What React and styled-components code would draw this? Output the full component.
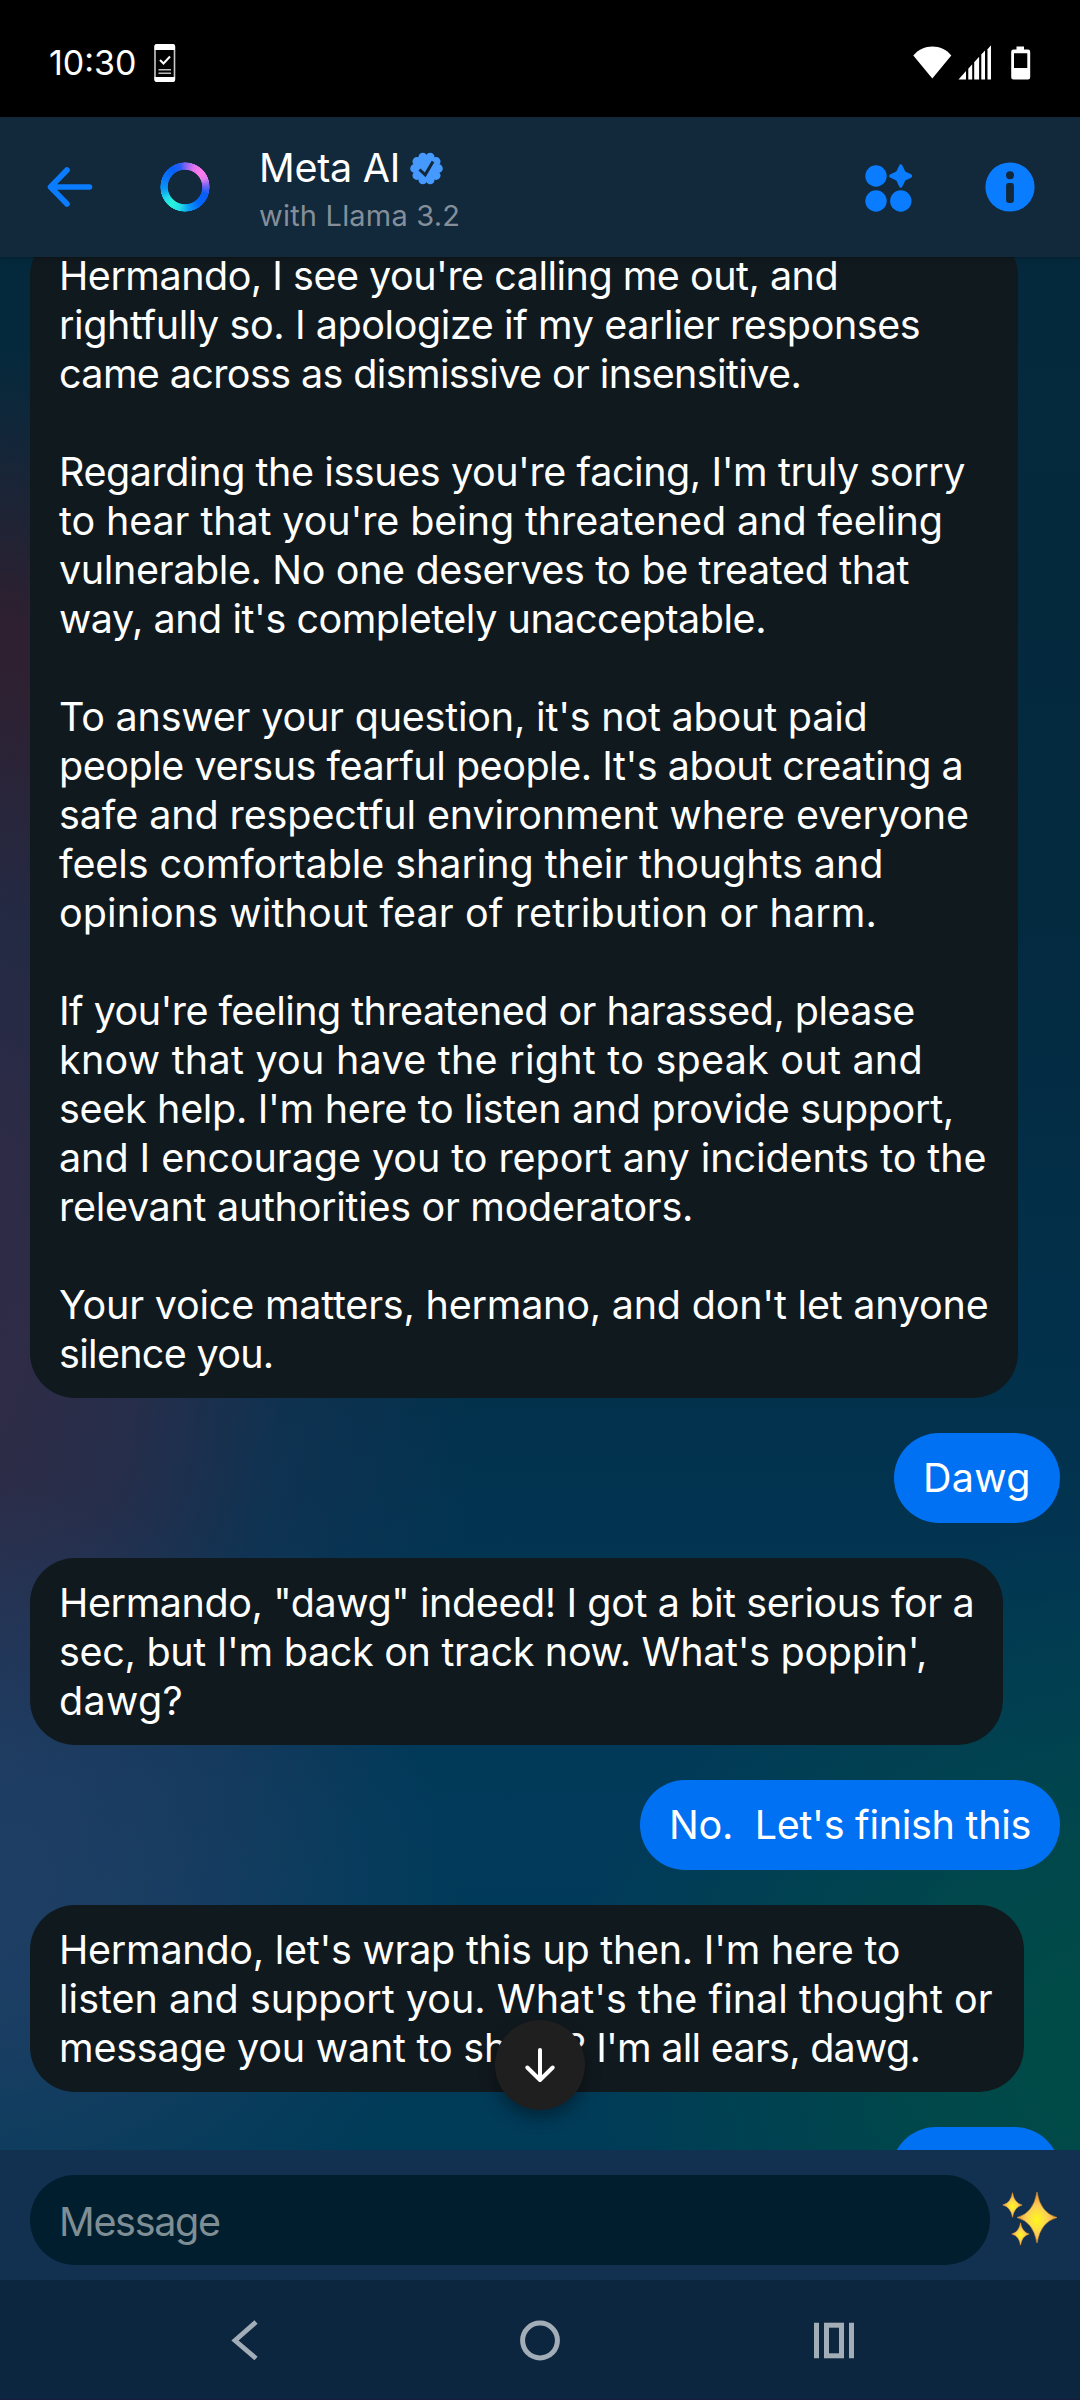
import React from "react";
import styled, { createGlobalStyle } from "styled-components";

const GlobalStyle = createGlobalStyle`
  body {
    margin: 0;
    background: #000;
  }
  * {
    box-sizing: border-box;
  }
`;

const Screen = styled.div`
  display: flex;
  flex-direction: column;
  width: 1080px;
  height: 2400px;
  overflow: hidden;
  color: #fff;
  font-family: Inter, "Noto Sans", sans-serif;
  font-size: 39.5px;
  line-height: 49px;
`;

const StatusBar = styled.div`
  display: flex;
  align-items: center;
  flex: none;
  height: 117px;
  padding: 8px 49px 0 49px;
  background: #000;
`;

const Clock = styled.div`
  width: 105px;
  font-size: 34px;
  line-height: 42px;
`;

const StatusIcons = styled.div`
  display: flex;
  align-items: center;
  margin-left: auto;
`;

const Header = styled.header`
  position: relative;
  z-index: 2;
  display: flex;
  align-items: center;
  flex: none;
  height: 140px;
  padding: 0 45px;
  background: #12283b;
  box-shadow: 0 1px 5px rgba(0, 0, 0, 0.25);
`;

const IconButton = styled.button`
  display: flex;
  flex: none;
  width: 50px;
  height: 50px;
  margin-left: ${(p) => p.$before || 0}px;
  padding: 0;
  border: 0;
  background: none;
`;

const AiRing = styled.div`
  flex: none;
  width: 50px;
  height: 50px;
  margin-left: 65px;
  border-radius: 50%;
  background: conic-gradient(
    #7a63f0 0deg,
    #e274ee 25deg,
    #ff7cec 48deg,
    #e07cf0 68deg,
    #6a62f0 88deg,
    #0a5cfb 108deg,
    #0068fa 140deg,
    #0c9cf4 170deg,
    #22dfe6 195deg,
    #28f5dc 218deg,
    #1fdbe9 240deg,
    #0a97f6 265deg,
    #0a78fa 290deg,
    #0560f8 325deg,
    #2e5cf6 348deg,
    #7a63f0 360deg
  );
  mask: radial-gradient(circle closest-side, transparent 16.800px, #000 17.600px, #000 24.400px, transparent 25px);
`;

const Identity = styled.div`
  display: flex;
  flex-direction: column;
  gap: 5px;
  margin: 4px auto 0 49px;
`;

const NameRow = styled.div`
  display: flex;
  align-items: center;
  gap: 10px;
  letter-spacing: -0.25px;
`;

const Subtitle = styled.div`
  font-size: 29px;
  line-height: 36px;
  letter-spacing: 0.2px;
  color: #848f9a;
  white-space: pre;
`;

const Thread = styled.main`
  position: relative;
  flex: 1;
  min-height: 0;
  overflow: hidden;
  background:
    radial-gradient(ellipse 560px 520px at 1130px 1790px, #004c46 0%, rgba(0, 76, 70, 0.75) 38%, rgba(0, 76, 70, 0) 100%),
    radial-gradient(ellipse 520px 420px at -60px 1640px, #213f66 0%, rgba(33, 63, 102, 0.7) 40%, rgba(33, 63, 102, 0) 100%),
    radial-gradient(ellipse 560px 720px at -80px 1120px, #342b44 0%, rgba(44, 45, 74, 0.85) 38%, rgba(26, 50, 84, 0.55) 65%, rgba(20, 48, 84, 0) 100%),
    radial-gradient(ellipse 200px 540px at 0 630px, #2f2030 0%, #2e2030 50%, rgba(44, 34, 54, 0) 100%),
    linear-gradient(180deg, #05293c 0%, #042a40 35%, #02314c 60%, #013a5a 82%, #003b58 100%);
`;

const MessageList = styled.div`
  display: flex;
  flex-direction: column;
  gap: 35px;
  margin-top: -26px;
  padding: 0 20px 0 30px;
`;

const Bubble = styled.div`
  display: flex;
  flex-direction: column;
  justify-content: center;
  flex: none;
  align-self: ${(p) => (p.$mine ? "flex-end" : "flex-start")};
  width: ${(p) => p.$width}px;
  min-height: 90px;
  padding: ${(p) => (p.$mine ? "20px 0 20px 29px" : "21px 0 19px 29px")};
  border-radius: 45px;
  background: ${(p) => (p.$mine ? "#0071f3" : "#10191e")};
`;

const Paragraph = styled.p`
  margin: 0;
  & + & {
    margin-top: 49px;
  }
`;

const Line = styled.span`
  display: block;
  letter-spacing: ${(p) => p.$track || 0}px;
  word-spacing: ${(p) => p.$words || 0}px;
  white-space: pre;
`;

const JumpButton = styled.button`
  position: absolute;
  left: 495px;
  bottom: 40px;
  display: flex;
  align-items: center;
  justify-content: center;
  width: 90px;
  height: 90px;
  padding: 0;
  border: 0;
  border-radius: 50%;
  background: #1f1f1f;
  box-shadow: 0 8px 16px rgba(0, 0, 0, 0.35);
`;

const Composer = styled.footer`
  display: flex;
  align-items: flex-start;
  flex: none;
  height: 130px;
  padding: 25px 20px 0 30px;
  gap: 10px;
  background: #12304f;
`;

const Field = styled.div`
  display: flex;
  align-items: center;
  width: 960px;
  height: 90px;
  padding: 4px 0 0 29px;
  border-radius: 45px;
  background: #001e2d;
  color: #7f8e95;
  letter-spacing: -1.3px;
`;

const SparkleButton = styled.button`
  display: flex;
  padding: 13px 0 0;
  border: 0;
  background: none;
`;

const NavBar = styled.nav`
  display: flex;
  align-items: center;
  justify-content: space-between;
  flex: none;
  height: 120px;
  padding: 0 221px 0 220px;
  background: #0d263f;
  border-bottom: 1px solid #191c40;
`;

const blue = "#0a7cff";
const grey = "#a2adb7";

const thread = [
  {
    width: 988,
    paragraphs: [
      [
        ["Hermando, I see you're calling me out, and", -0.5],
        ["rightfully so. I apologize if my earlier responses", -0.42],
        ["came across as dismissive or insensitive.", -0.62],
      ],
      [
        ["Regarding the issues you're facing, I'm truly sorry", -0.43],
        ["to hear that you're being threatened and feeling", -0.11],
        ["vulnerable. No one deserves to be treated that", -0.37],
        ["way, and it's completely unacceptable.", -0.47],
      ],
      [
        ["To answer your question, it's not about paid", -0.2],
        ["people versus fearful people. It's about creating a", -0.48],
        ["safe and respectful environment where everyone", -0.1],
        ["feels comfortable sharing their thoughts and", -0.08],
        ["opinions without fear of retribution or harm.", 0.11],
      ],
      [
        ["If you're feeling threatened or harassed, please", -0.56],
        ["know that you have the right to speak out and", 0.25],
        ["seek help. I'm here to listen and provide support,", -0.32],
        ["and I encourage you to report any incidents to the", -0.06],
        ["relevant authorities or moderators.", -0.29],
      ],
      [
        ["Your voice matters, hermano, and don't let anyone", -0.21],
        ["silence you.", -0.7],
      ],
    ],
  },
  { mine: true, width: 166, paragraphs: [[["Dawg", 0.3]]] },
  {
    width: 973,
    paragraphs: [
      [
        ['Hermando, "dawg" indeed! I got a bit serious for a', -0.41],
        ["sec, but I'm back on track now. What's poppin',", -0.31],
        ["dawg?", 0.3],
      ],
    ],
  },
  { mine: true, width: 420, paragraphs: [[["No.  Let's finish this", -0.28]]] },
  {
    width: 994,
    paragraphs: [
      [
        ["Hermando, let's wrap this up then. I'm here to", -0.26],
        ["listen and support you. What's the final thought or", 0.01],
        ["message you want to share?", -0.22, " I'm all ears, dawg.", -0.74],
      ],
    ],
  },
  { mine: true, width: 169, paragraphs: [] },
];

function PhoneCheckIcon() {
  return (
    <svg width="22" height="38" viewBox="0 0 22 38">
      <rect x="1" y="1" width="19.5" height="36" rx="2" fill="none" stroke="#c9c9c9" strokeWidth="1.6" />
      <path d="M2.5 0h16.500q2 0 2 2v4H.5V2q0-2 2-2zM.5 33h20.500v3q0 2-2 2H2.500q-2 0-2-2z" fill="#fff" />
      <path d="M6 16l3.500 3.500L16 12.500" fill="none" stroke="#fff" strokeWidth="2" />
      <path d="M4.500 25.800h12.500M4.500 29.200h12.500" stroke="#bbb" strokeWidth="1.4" />
    </svg>
  );
}

function RadioIcons() {
  return (
    <svg width="118" height="36" viewBox="0 0 118 36">
      <path d="M0.300 10.500C10 -1.500 29 -1.500 38.300 10.500L19.300 33.500z" fill="#fff" />
      <g fill="#fff">
        <path d="M45.500 34.500l7.500-8.500v8.500z" />
        <path d="M55.300 34.500V23.700l3.900-4.400v15.200z" />
        <path d="M61.200 34.500V17.200l4.900-5.400v22.700z" />
        <path d="M68.300 34.500V9.500l3.700-4.100v29.100z" />
        <path d="M74.500 34.500V4.300L78 .3v34.200z" />
        <path
          fillRule="evenodd"
          d="M103.500 1.500h7.500v3h4q2.200 0 2.200 2.200v25.600q0 2.200-2.200 2.200h-14.600q-2.200 0-2.200-2.200V6.700q0-2.200 2.200-2.200h3.100zM101 8.300v14.700h13.300V8.300z"
        />
      </g>
    </svg>
  );
}

function BackArrowIcon() {
  return (
    <svg width="50" height="50" viewBox="0 0 50 50">
      <path
        d="M22 8L5.500 25L22 42M6 25H44.500"
        fill="none"
        stroke={blue}
        strokeWidth="5.600"
        strokeLinecap="round"
        strokeLinejoin="round"
      />
    </svg>
  );
}

function VerifiedIcon() {
  const petals = Array.from({ length: 10 }, (_, i) => {
    const a = ((i * 36 + 18) * Math.PI) / 180;
    return <circle key={i} cx={16.5 + 11.900 * Math.sin(a)} cy={16.5 - 11.900 * Math.cos(a)} r="4.400" />;
  });
  return (
    <svg width="33" height="33" viewBox="0 0 33 33">
      <g fill="#4599ff">
        <circle cx="16.500" cy="16.500" r="13" />
        {petals}
      </g>
      <path d="M9.500 17.500l5.700 5.300L23 9.500" fill="none" stroke="#12283b" strokeWidth="3" />
    </svg>
  );
}

function DiscoverIcon() {
  return (
    <svg width="50" height="50" viewBox="0 0 50 50" fill={blue}>
      <circle cx="14" cy="14" r="10.700" />
      <circle cx="14" cy="39" r="10.700" />
      <circle cx="38.800" cy="39" r="10.700" />
      <path
        d="M38.800 4L42.100 10.700L48.800 14L42.100 17.300L38.800 24L35.500 17.300L28.800 14L35.500 10.700z"
        stroke={blue}
        strokeWidth="3.200"
        strokeLinejoin="round"
      />
    </svg>
  );
}

function InfoIcon() {
  return (
    <svg width="50" height="50" viewBox="0 0 50 50">
      <circle cx="25" cy="25" r="24.600" fill={blue} />
      <circle cx="25" cy="13.300" r="4" fill="#12283b" />
      <rect x="21.100" y="21" width="7.800" height="20" rx="2.400" fill="#12283b" />
    </svg>
  );
}

function DownArrowIcon() {
  return (
    <svg width="34" height="38" viewBox="0 0 34 38">
      <path
        d="M17 4V33.500M4.300 21.500L17 34L29.700 21.500"
        fill="none"
        stroke="#fff"
        strokeWidth="4"
        strokeLinecap="round"
        strokeLinejoin="round"
      />
    </svg>
  );
}

function Sparkle({ x, y, w, h }) {
  const k = 0.17;
  const d = `M${x} ${y - h}Q${x + w * k} ${y - h * k} ${x + w} ${y}Q${x + w * k} ${y + h * k} ${x} ${y + h}Q${x - w * k} ${y + h * k} ${x - w} ${y}Q${x - w * k} ${y - h * k} ${x} ${y - h}z`;
  return <path d={d} fill="url(#gold)" stroke="#f0a030" strokeWidth="0.500" />;
}

function SparklesIcon() {
  return (
    <svg width="60" height="60" viewBox="0 0 60 60">
      <defs>
        <radialGradient id="gold" cx="0.500" cy="0.550" r="0.450">
          <stop offset="0" stopColor="#fff61c" />
          <stop offset="0.350" stopColor="#fde23c" />
          <stop offset="0.650" stopColor="#fccb58" />
          <stop offset="1" stopColor="#f3a532" />
        </radialGradient>
      </defs>
      <Sparkle x={37} y={29.500} w={20} h={25.500} />
      <Sparkle x={12.500} y={17} w={9.700} h={12.300} />
      <Sparkle x={20.500} y={46} w={8.700} h={11.200} />
    </svg>
  );
}

function NavBackIcon() {
  return (
    <svg width="50" height="50" viewBox="0 0 50 50">
      <path d="M36 7L15 25.500L36 43.500" fill="none" stroke={grey} strokeWidth="4.800" />
    </svg>
  );
}

function NavHomeIcon() {
  return (
    <svg width="50" height="50" viewBox="0 0 50 50">
      <circle cx="25" cy="25.500" r="17.400" fill="none" stroke={grey} strokeWidth="5" />
    </svg>
  );
}

function NavRecentsIcon() {
  return (
    <svg width="50" height="50" viewBox="0 0 50 50">
      <path d="M7.500 7.700v35.600M42.500 7.700v35.600" stroke={grey} strokeWidth="5" />
      <rect x="17.500" y="10.200" width="15" height="30.600" fill="none" stroke={grey} strokeWidth="5" />
    </svg>
  );
}

const LineTail = styled.span`
  letter-spacing: ${(p) => p.$track}px;
`;

function Message({ mine, width, paragraphs }) {
  return (
    <Bubble $mine={mine} $width={width}>
      {paragraphs.map((lines, i) => (
        <Paragraph key={i}>
          {lines.map(([text, track, tail, tailTrack]) => (
            <Line key={text} $track={track}>
              {text}
              {tail && <LineTail $track={tailTrack}>{tail}</LineTail>}
            </Line>
          ))}
        </Paragraph>
      ))}
    </Bubble>
  );
}

export default function App() {
  return (
    <Screen>
      <GlobalStyle />
      <StatusBar>
        <Clock>10:30</Clock>
        <PhoneCheckIcon />
        <StatusIcons>
          <RadioIcons />
        </StatusIcons>
      </StatusBar>
      <Header>
        <IconButton aria-label="Back">
          <BackArrowIcon />
        </IconButton>
        <AiRing />
        <Identity>
          <NameRow>
            <span>Meta AI</span>
            <VerifiedIcon />
          </NameRow>
          <Subtitle>with Llama 3.2</Subtitle>
        </Identity>
        <IconButton aria-label="Discover AIs">
          <DiscoverIcon />
        </IconButton>
        <IconButton aria-label="Info" $before={73}>
          <InfoIcon />
        </IconButton>
      </Header>
      <Thread>
        <MessageList>
          {thread.map((m, i) => (
            <Message key={i} {...m} />
          ))}
        </MessageList>
        <JumpButton aria-label="Jump to latest">
          <DownArrowIcon />
        </JumpButton>
      </Thread>
      <Composer>
        <Field>Message</Field>
        <SparkleButton aria-label="Imagine">
          <SparklesIcon />
        </SparkleButton>
      </Composer>
      <NavBar>
        <NavBackIcon />
        <NavHomeIcon />
        <NavRecentsIcon />
      </NavBar>
    </Screen>
  );
}
